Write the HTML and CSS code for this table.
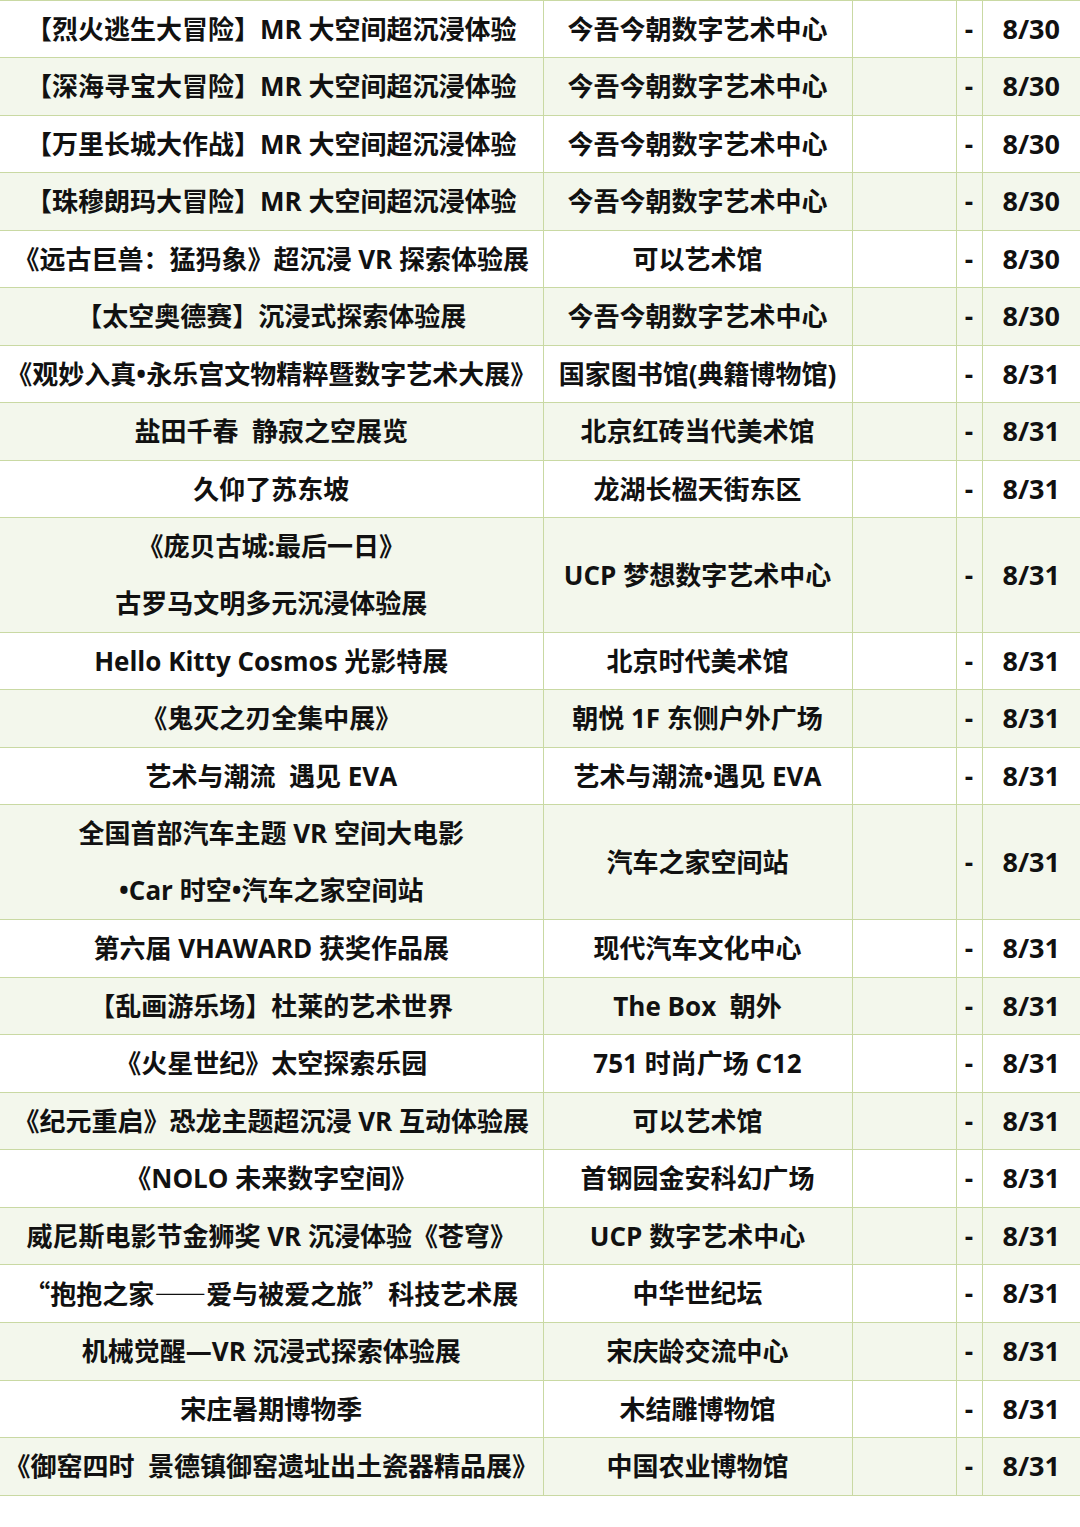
FILE: index.html
```html
<!DOCTYPE html>
<html lang="zh-CN">
<head>
<meta charset="utf-8">
<title>展览列表</title>
<link rel="stylesheet" href="styles.css">
</head>
<body>
<table class="schedule">
  <colgroup>
    <col class="c-name"><col class="c-venue"><col class="c-blank"><col class="c-dash"><col class="c-date">
  </colgroup>
  <tbody>
    <tr><td>【烈火逃生大冒险】MR 大空间超沉浸体验</td><td>今吾今朝数字艺术中心</td><td></td><td>-</td><td>8/30</td></tr>
    <tr><td>【深海寻宝大冒险】MR 大空间超沉浸体验</td><td>今吾今朝数字艺术中心</td><td></td><td>-</td><td>8/30</td></tr>
    <tr><td>【万里长城大作战】MR 大空间超沉浸体验</td><td>今吾今朝数字艺术中心</td><td></td><td>-</td><td>8/30</td></tr>
    <tr><td>【珠穆朗玛大冒险】MR 大空间超沉浸体验</td><td>今吾今朝数字艺术中心</td><td></td><td>-</td><td>8/30</td></tr>
    <tr><td>《远古巨兽：猛犸象》超沉浸 VR 探索体验展</td><td>可以艺术馆</td><td></td><td>-</td><td>8/30</td></tr>
    <tr><td>【太空奥德赛】沉浸式探索体验展</td><td>今吾今朝数字艺术中心</td><td></td><td>-</td><td>8/30</td></tr>
    <tr><td>《观妙入真•永乐宫文物精粹暨数字艺术大展》</td><td>国家图书馆(典籍博物馆)</td><td></td><td>-</td><td>8/31</td></tr>
    <tr><td>盐田千春&nbsp; 静寂之空展览</td><td>北京红砖当代美术馆</td><td></td><td>-</td><td>8/31</td></tr>
    <tr><td>久仰了苏东坡</td><td>龙湖长楹天街东区</td><td></td><td>-</td><td>8/31</td></tr>
    <tr class="double"><td>《庞贝古城:最后一日》<br>古罗马文明多元沉浸体验展</td><td>UCP 梦想数字艺术中心</td><td></td><td>-</td><td>8/31</td></tr>
    <tr><td>Hello Kitty Cosmos 光影特展</td><td>北京时代美术馆</td><td></td><td>-</td><td>8/31</td></tr>
    <tr><td>《鬼灭之刃全集中展》</td><td>朝悦 1F 东侧户外广场</td><td></td><td>-</td><td>8/31</td></tr>
    <tr><td>艺术与潮流&nbsp; 遇见 EVA</td><td>艺术与潮流•遇见 EVA</td><td></td><td>-</td><td>8/31</td></tr>
    <tr class="double"><td>全国首部汽车主题 VR 空间大电影<br>•Car 时空•汽车之家空间站</td><td>汽车之家空间站</td><td></td><td>-</td><td>8/31</td></tr>
    <tr><td>第六届 VHAWARD 获奖作品展</td><td>现代汽车文化中心</td><td></td><td>-</td><td>8/31</td></tr>
    <tr><td>【乱画游乐场】杜莱的艺术世界</td><td>The Box&nbsp; 朝外</td><td></td><td>-</td><td>8/31</td></tr>
    <tr><td>《火星世纪》太空探索乐园</td><td>751 时尚广场 C12</td><td></td><td>-</td><td>8/31</td></tr>
    <tr><td>《纪元重启》恐龙主题超沉浸 VR 互动体验展</td><td>可以艺术馆</td><td></td><td>-</td><td>8/31</td></tr>
    <tr><td>《NOLO 未来数字空间》</td><td>首钢园金安科幻广场</td><td></td><td>-</td><td>8/31</td></tr>
    <tr><td>威尼斯电影节金狮奖 VR 沉浸体验《苍穹》</td><td>UCP 数字艺术中心</td><td></td><td>-</td><td>8/31</td></tr>
    <tr><td><span class="cjk">“</span>抱抱之家<span class="cjk">——</span>爱与被爱之旅<span class="cjk">”</span>科技艺术展</td><td>中华世纪坛</td><td></td><td>-</td><td>8/31</td></tr>
    <tr><td>机械觉醒—VR 沉浸式探索体验展</td><td>宋庆龄交流中心</td><td></td><td>-</td><td>8/31</td></tr>
    <tr><td>宋庄暑期博物季</td><td>木结雕博物馆</td><td></td><td>-</td><td>8/31</td></tr>
    <tr><td>《御窑四时&nbsp; 景德镇御窑遗址出土瓷器精品展》</td><td>中国农业博物馆</td><td></td><td>-</td><td>8/31</td></tr>
  </tbody>
</table>
</body>
</html>
```

FILE: styles.css
```css
html, body {
  margin: 0;
  padding: 0;
  background: #ffffff;
}

.schedule {
  width: 1080px;
  border-collapse: collapse;
  table-layout: fixed;
  font-family: "Open Sans", "Noto Sans CJK SC", sans-serif;
  font-weight: 700;
  font-size: 26px;
  color: #111111;
}

.c-name { width: 543px; }
.c-venue { width: 309px; }
.c-blank { width: 104px; }
.c-dash { width: 26px; }
.c-date { width: 98px; }

.schedule td {
  border: 1px solid #c9d9a3;
  padding: 0;
  height: 56.45px;
  line-height: 56.45px;
  text-align: center;
  white-space: nowrap;
  overflow: visible;
}

.schedule td:first-child {
  border-left: none;
}

.schedule td:last-child {
  border-right: none;
  font-size: 27px;
}

.schedule tr:nth-child(even) td {
  background: #f3f7ec;
}

.schedule tr.double td {
  height: 113.9px;
  line-height: 56.95px;
}

.cjk {
  font-family: "Noto Sans CJK SC", sans-serif;
}
```
